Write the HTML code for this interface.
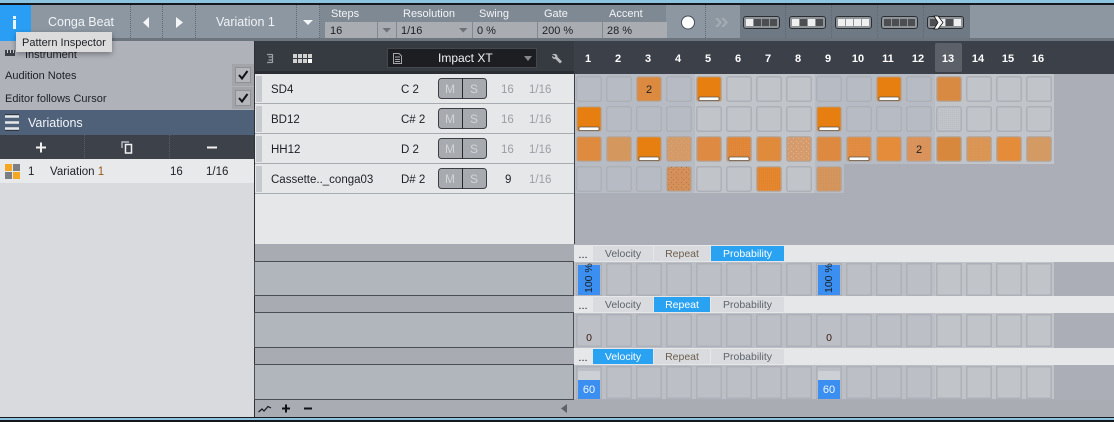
<!DOCTYPE html>
<html><head><meta charset="utf-8"><style>
html,body{margin:0;padding:0;background:#abaeb6}
svg{display:block}
text{font-family:"Liberation Sans",sans-serif;font-size:11px}
.w{fill:#f2f4f6;font-size:11px}
.d{fill:#1d2026}
.g{fill:#9b9ea3}
.h{fill:#fff;font-weight:bold;font-size:11px;text-anchor:middle}
.tab{font-size:10.500px;text-anchor:middle;fill:#5e646c}
</style></head><body>
<svg width="1114" height="422" viewBox="0 0 1114 422" xmlns="http://www.w3.org/2000/svg">
<defs>
<pattern id="c" patternUnits="userSpaceOnUse" x="576" y="76" width="30" height="30"><rect x=".75" y=".75" width="24.5" height="24.5" rx="2" fill="none" stroke="#adb0b7" stroke-width="1.500"/></pattern>
<pattern id="l" patternUnits="userSpaceOnUse" x="576" y="263" width="30" height="200"><rect x=".75" y=".75" width="24.5" height="31.5" fill="none" stroke="#aeb1b7" stroke-width="1.500"/></pattern>
<pattern id="dd" patternUnits="userSpaceOnUse" width="5" height="5"><rect x="1" y="2" width="1" height="1" fill="#a8764f"/><rect x="3" y="4" width="1" height="1" fill="#b07e56"/></pattern>
<pattern id="dw" patternUnits="userSpaceOnUse" width="5" height="5"><rect x="1" y="1" width="1" height="1" fill="#ecc4a2" opacity=".7"/><rect x="3" y="3" width="1" height="1" fill="#e8bd98" opacity=".7"/></pattern>
<pattern id="df" patternUnits="userSpaceOnUse" width="2" height="2"><rect width="1" height="1" fill="#e8a060" opacity=".25"/></pattern>
<pattern id="dg" patternUnits="userSpaceOnUse" width="2" height="2"><rect width="1" height="1" fill="#b3b6bb" opacity=".6"/></pattern>
<filter id="sh" x="-20%" y="-30%" width="140%" height="180%"><feDropShadow dx="0" dy="2" stdDeviation="3" flood-color="#000" flood-opacity=".35"/></filter>
</defs>

<!-- window edges -->
<rect width="1114" height="3" fill="#8cc3df"/><rect y="3" width="1114" height="2" fill="#15181c"/>

<!-- toolbar -->
<rect y="5" width="1114" height="33" fill="#8c97a2"/>
<rect y="38" width="1114" height="3" fill="#6c747e"/>
<rect x="320" y="5" width="346" height="33" fill="#7f8994"/>
<rect x="740" y="5" width="230" height="33" fill="#6f7984"/>
<g stroke="#5f6872" stroke-dasharray="1 1">
<path d="M130.500 5V38M162.500 5V38M195.500 5V38M296.500 5V38M319.500 5V38M705.500 5V38M785.500 5V38M831.500 5V38M877.500 5V38M923.500 5V38"/></g>
<rect y="5" width="31" height="36" fill="#2a9ef4"/>
<rect x="13" y="16" width="3" height="3" fill="#e8f4ff"/><rect x="13" y="20" width="3" height="9" fill="#e8f4ff"/>
<text x="48" y="26" fill="#f1f3f5" style="font-size:12.500px">Conga Beat</text>
<path d="M149 17V28L143 22.500Z" fill="#f4f5f6"/><path d="M176 17V28L183 22.500Z" fill="#f4f5f6"/>
<text x="216" y="26" style="font-size:12.500px" fill="#f1f3f5">Variation 1</text>
<path d="M303 20H313L308 25Z" fill="#f4f5f6"/>

<text x="331" y="17" class="w">Steps</text><text x="403" y="17" class="w">Resolution</text><text x="479" y="17" class="w">Swing</text><text x="544" y="17" class="w">Gate</text><text x="609" y="17" class="w">Accent</text>
<g fill="#a9adb2"><rect x="325" y="22" width="52" height="16"/><rect x="378" y="22" width="18" height="16"/><rect x="397" y="22" width="75" height="16"/><rect x="473" y="22" width="64" height="16"/><rect x="538" y="22" width="64" height="16"/><rect x="603" y="22" width="64" height="16"/></g>
<text x="330" y="34" class="d">16</text><text x="401" y="34" class="d">1/16</text><text x="477" y="34" class="d">0 %</text><text x="542" y="34" class="d">200 %</text><text x="607" y="34" class="d">28 %</text>
<path d="M382.500 28H391L386.750 32.500ZM459 28H467.500L463.250 32.500Z" fill="#6e7278"/>

<circle cx="688" cy="22.500" r="6.500" fill="#fff" stroke="#4a5058"/>
<path d="M715 18L719 22.500L715 27H718L722 22.500L718 18ZM721 18L725 22.500L721 27H724L728 22.500L724 18Z" fill="#a4aab0"/>

<!-- pattern buttons -->
<g stroke="#2b2e32" fill="#8f9499"><rect x="743.500" y="16.500" width="36" height="12" rx="2.500"/><rect x="789.500" y="16.500" width="36" height="12" rx="2.500"/><rect x="835.500" y="16.500" width="36" height="12" rx="2.500"/><rect x="881.500" y="16.500" width="36" height="12" rx="2.500"/><rect x="927.500" y="16.500" width="36" height="12" rx="2.500"/></g>
<g fill="#f0f0f0"><rect x="746" y="19" width="7" height="7"/><rect x="792" y="19" width="7" height="7"/><rect x="808" y="19" width="7" height="7"/><rect x="838" y="19" width="7" height="7"/><rect x="846" y="19" width="7" height="7"/><rect x="854" y="19" width="7" height="7"/><rect x="862" y="19" width="7" height="7"/><rect x="938" y="19" width="7" height="7"/><rect x="954" y="19" width="7" height="7"/></g>
<g fill="#4c4e52"><rect x="754" y="19" width="7" height="7"/><rect x="762" y="19" width="7" height="7"/><rect x="770" y="19" width="7" height="7"/><rect x="800" y="19" width="7" height="7"/><rect x="816" y="19" width="7" height="7"/><rect x="884" y="19" width="7" height="7"/><rect x="892" y="19" width="7" height="7"/><rect x="900" y="19" width="7" height="7"/><rect x="908" y="19" width="7" height="7"/><rect x="930" y="19" width="7" height="7"/><rect x="946" y="19" width="7" height="7"/></g>
<path d="M934 16H938L943 22.500L938 29H934L938 22.500Z" fill="#fff" stroke="#111" stroke-width=".8"/>

<!-- left panel -->
<rect y="41" width="254" height="69" fill="#b0b2ba"/>
<rect x="5" y="50" width="10" height="6" fill="#3c3f46"/>
<g fill="#d0d2d6"><rect x="7" y="50" width="1" height="3"/><rect x="10" y="50" width="1" height="3"/><rect x="13" y="50" width="1" height="3"/></g>
<text x="25" y="58" class="d">Instrument</text>
<text x="5" y="79" class="d">Audition Notes</text>
<text x="5" y="102" class="d">Editor follows Cursor</text>
<rect x="232" y="64" width="22" height="22" fill="#a2a4aa"/><rect x="235.500" y="67.500" width="15" height="15" fill="#b4b6bc" stroke="#8e9096"/>
<rect x="232" y="87" width="22" height="22" fill="#a2a4aa"/><rect x="235.500" y="90.500" width="15" height="15" fill="#b4b6bc" stroke="#8e9096"/>
<path d="M239 75L242 78.500L247.500 71M239 98L242 101.500L247.500 94" fill="none" stroke="#101215" stroke-width="2"/>

<rect y="110" width="254" height="25" fill="#4f6079"/>
<path d="M5 116.500H19M5 122.500H19M5 128.500H19" stroke="#e6e8ea" stroke-width="2.500"/>
<path d="M5 114.500H19M5 130.500H19" stroke="#242a33" stroke-width=".8"/>
<text x="28" y="127" fill="#f2f5f8" style="font-size:12.500px">Variations</text>
<rect y="135" width="254" height="24" fill="#3d4149"/>
<path d="M84.500 135V159M169.500 135V159" stroke="#5a5e66" stroke-dasharray="1 1"/>
<path d="M36 147.500H46M41 142.500V152.500M207 147.500H217" stroke="#f2f2f2" stroke-width="2" fill="none"/>
<path d="M122 148V142H129" fill="none" stroke="#cfd1d4" stroke-width="1.200"/><rect x="125.500" y="144.500" width="6" height="8.500" fill="#3d4149" stroke="#f2f2f2" stroke-width="1.500"/>
<rect y="159" width="254" height="24" fill="#e8e9ea"/>
<rect y="183" width="254" height="234" fill="#d9dade"/>
<rect x="5" y="164" width="7" height="7" fill="#f5a623"/><rect x="13" y="164" width="7" height="7" fill="#7c7f84"/><rect x="5" y="172" width="7" height="7" fill="#7c7f84"/><rect x="13" y="172" width="7" height="7" fill="#f5a623"/>
<text x="28" y="175" class="d" style="font-size:11.500px">1</text>
<text x="50" y="175" class="d" style="font-size:11.500px">Variation <tspan fill="#9c5a1a">1</tspan></text>
<text x="170" y="175" class="d" style="font-size:11.500px">16</text>
<text x="206" y="175" class="d" style="font-size:11.500px">1/16</text>

<!-- header -->
<rect x="254" y="41" width="860" height="33" fill="#3c4049"/>
<rect x="254" y="41" width="320" height="33" fill="#363a41"/>
<rect x="254" y="71" width="320" height="3" fill="#2a2d33"/>
<path d="M272.500 54V63M267 54.500H272M268.500 57H272M268.500 60H272M267 62.500H272" fill="none" stroke="#9b9ea3" stroke-width="1.200"/>
<g fill="#d2d2d2"><rect x="293" y="54" width="4" height="4"/><rect x="298" y="54" width="4" height="4"/><rect x="303" y="54" width="4" height="4"/><rect x="308" y="54" width="4" height="4"/><rect x="293" y="59" width="4" height="4"/><rect x="298" y="59" width="4" height="4"/><rect x="303" y="59" width="4" height="4"/></g>
<rect x="308" y="59" width="4" height="4" fill="#fff"/>
<rect x="387.500" y="48.500" width="149" height="19" fill="#1d1e21" stroke="#44474d"/>
<path d="M393.500 53.500H399L401.500 56V63.500H393.500ZM395 57H400M395 59.500H400M395 61.500H400" fill="none" stroke="#a5a7aa"/>
<text x="438" y="62" fill="#f0f2f4" style="font-size:12px">Impact XT</text>
<path d="M524 56H532L528 61Z" fill="#85888c"/>
<path d="M552 54.500C555 53 558 54.500 557.500 57L562 61.500L560 63.500L555.500 59C553.500 59.500 551.500 57.500 552 56L554.500 57.500L555.500 56Z" fill="#b9bbbe"/>
<rect x="935" y="43" width="27" height="29" rx="2" fill="#5c6068"/>
<text x="588" y="62" class="h">1</text><text x="618" y="62" class="h">2</text><text x="648" y="62" class="h">3</text><text x="678" y="62" class="h">4</text><text x="708" y="62" class="h">5</text><text x="738" y="62" class="h">6</text><text x="768" y="62" class="h">7</text><text x="798" y="62" class="h">8</text><text x="828" y="62" class="h">9</text><text x="858" y="62" class="h">10</text><text x="888" y="62" class="h">11</text><text x="918" y="62" class="h">12</text><text x="948" y="62" class="h">13</text><text x="978" y="62" class="h">14</text><text x="1008" y="62" class="h">15</text><text x="1038" y="62" class="h">16</text>

<!-- track list -->
<rect x="255" y="74" width="319" height="170" fill="#e6e7e9"/>
<rect x="254" y="41" width="1" height="376" fill="#2e3136"/>
<path d="M255 103.500H574M255 133.500H574M255 163.500H574M255 193.500H574" stroke="#a8abb0"/>
<g fill="#c6c9cd"><rect x="256" y="76" width="6" height="26"/><rect x="256" y="106" width="6" height="26"/><rect x="256" y="136" width="6" height="26"/><rect x="256" y="166" width="6" height="26"/></g>
<text x="271" y="93" class="d" style="font-size:11.500px">SD4</text><text x="271" y="123" class="d" style="font-size:11.500px">BD12</text><text x="271" y="153" class="d" style="font-size:11.500px">HH12</text><text x="271" y="183" class="d" style="font-size:11.500px">Cassette.._conga03</text>
<text x="401" y="93" class="d" style="font-size:11.500px">C 2</text><text x="401" y="123" class="d" style="font-size:11.500px">C# 2</text><text x="401" y="153" class="d" style="font-size:11.500px">D 2</text><text x="401" y="183" class="d" style="font-size:11.500px">D# 2</text>
<g fill="#a7aaaf" stroke="#3b3e43"><rect x="438.500" y="78.500" width="48" height="20" rx="3"/><rect x="438.500" y="108.500" width="48" height="20" rx="3"/><rect x="438.500" y="138.500" width="48" height="20" rx="3"/><rect x="438.500" y="168.500" width="48" height="20" rx="3"/></g>
<path d="M462.500 78V99M462.500 108V129M462.500 138V159M462.500 168V189" stroke="#26282c"/>
<g style="font-size:12px"><text x="445" y="93" fill="#d2d4d7" style="font-size:12px">M</text><text x="470" y="93" fill="#d2d4d7" style="font-size:12px">S</text><text x="445" y="123" fill="#d2d4d7" style="font-size:12px">M</text><text x="470" y="123" fill="#d2d4d7" style="font-size:12px">S</text><text x="445" y="153" fill="#d2d4d7" style="font-size:12px">M</text><text x="470" y="153" fill="#d2d4d7" style="font-size:12px">S</text><text x="445" y="183" fill="#d2d4d7" style="font-size:12px">M</text><text x="470" y="183" fill="#d2d4d7" style="font-size:12px">S</text></g>
<text x="501" y="93" class="g" style="font-size:11.500px">16</text><text x="529" y="93" class="g" style="font-size:11.500px">1/16</text>
<text x="501" y="123" class="g" style="font-size:11.500px">16</text><text x="529" y="123" class="g" style="font-size:11.500px">1/16</text>
<text x="501" y="153" class="g" style="font-size:11.500px">16</text><text x="529" y="153" class="g" style="font-size:11.500px">1/16</text>
<text x="505" y="183" class="d" style="font-size:11.500px">9</text><text x="529" y="183" class="g" style="font-size:11.500px">1/16</text>

<!-- grid backgrounds -->
<rect x="574" y="74" width="540" height="343" fill="#abaeb6"/>
<rect x="574" y="74" width="1" height="170" fill="#3a3d42"/>
<rect x="575" y="74" width="120" height="90" fill="#b7bbc3"/><rect x="695" y="74" width="120" height="90" fill="#c1c4c9"/><rect x="815" y="74" width="120" height="90" fill="#b7bbc3"/><rect x="935" y="74" width="119" height="90" fill="#c1c4c9"/>
<rect x="575" y="164" width="120" height="29" fill="#b7bbc3"/><rect x="695" y="164" width="120" height="29" fill="#c1c4c9"/><rect x="815" y="164" width="29" height="29" fill="#b7bbc3"/>
<rect x="575" y="74" width="479" height="90" fill="url(#c)"/><rect x="575" y="164" width="269" height="29" fill="url(#c)"/>

<!-- active cells -->
<g stroke="#b9a28c" stroke-width=".8">
<rect x="637" y="77" width="24" height="24" rx="2" fill="#dc8a3f"/>
<rect x="697" y="77" width="24" height="24" rx="2" fill="#e67e10"/>
<rect x="877" y="77" width="24" height="24" rx="2" fill="#e67e10"/>
<rect x="937" y="77" width="24" height="24" rx="2" fill="#d98a42"/>
<rect x="577" y="107" width="24" height="24" rx="2" fill="#e67e10"/>
<rect x="817" y="107" width="24" height="24" rx="2" fill="#e67e10"/>
<rect x="577" y="137" width="24" height="24" rx="2" fill="#de8a3f"/>
<rect x="607" y="137" width="24" height="24" rx="2" fill="#d4985f"/>
<rect x="637" y="137" width="24" height="24" rx="2" fill="#e67e10"/>
<rect x="667" y="137" width="24" height="24" rx="2" fill="#d49a68"/>
<rect x="697" y="137" width="24" height="24" rx="2" fill="#de8a42"/>
<rect x="727" y="137" width="24" height="24" rx="2" fill="#e08535"/>
<rect x="757" y="137" width="24" height="24" rx="2" fill="#e08a3c"/>
<rect x="787" y="137" width="24" height="24" rx="2" fill="#d69b6c"/>
<rect x="817" y="137" width="24" height="24" rx="2" fill="#dd8a40"/>
<rect x="847" y="137" width="24" height="24" rx="2" fill="#e08a40"/>
<rect x="877" y="137" width="24" height="24" rx="2" fill="#e48c3a"/>
<rect x="907" y="137" width="24" height="24" rx="2" fill="#d9925a"/>
<rect x="937" y="137" width="24" height="24" rx="2" fill="#d8883c"/>
<rect x="967" y="137" width="24" height="24" rx="2" fill="#da9555"/>
<rect x="997" y="137" width="24" height="24" rx="2" fill="#e48c3a"/>
<rect x="1027" y="137" width="24" height="24" rx="2" fill="#d49a64"/>
<rect x="667" y="167" width="24" height="24" rx="2" fill="#d49058"/>
<rect x="757" y="167" width="24" height="24" rx="2" fill="#e4842a"/>
<rect x="817" y="167" width="24" height="24" rx="2" fill="#d3945c"/>
</g>
<rect x="937" y="107" width="24" height="24" fill="url(#dg)"/>
<rect x="667" y="137" width="24" height="24" fill="url(#dw)" opacity=".4"/>
<rect x="727" y="137" width="24" height="24" fill="url(#df)"/>
<rect x="787" y="137" width="24" height="24" fill="url(#dw)"/>
<rect x="847" y="137" width="24" height="24" fill="url(#df)"/>
<rect x="907" y="137" width="24" height="24" fill="url(#df)"/>
<rect x="967" y="137" width="24" height="24" fill="url(#df)"/>
<rect x="667" y="167" width="24" height="24" fill="url(#dd)"/>
<rect x="757" y="167" width="24" height="24" fill="url(#df)"/>
<rect x="817" y="167" width="24" height="24" fill="url(#df)"/>
<g fill="#fff" stroke="#5c534a" stroke-width=".8">
<rect x="699" y="97" width="20" height="3.500" rx="1"/><rect x="879" y="97" width="20" height="3.500" rx="1"/>
<rect x="579" y="127" width="20" height="3.500" rx="1"/><rect x="819" y="127" width="20" height="3.500" rx="1"/>
<rect x="639" y="157" width="20" height="3.500" rx="1"/><rect x="729" y="157" width="20" height="3.500" rx="1"/><rect x="849" y="157" width="20" height="3.500" rx="1"/>
</g>
<text x="649" y="93" class="d" text-anchor="middle">2</text><text x="919" y="153" class="d" text-anchor="middle">2</text>

<!-- lower lanes: left -->
<rect x="255" y="244" width="319" height="173" fill="#a8abb2"/>
<g fill="#b0b6bc" stroke="#4a4d52"><rect x="254.500" y="261.500" width="319" height="34"/><rect x="254.500" y="312.500" width="319" height="35"/><rect x="254.500" y="364.500" width="319" height="35"/></g>

<!-- lower lanes: tabs -->
<g fill="#e6e7e9"><rect x="574" y="245" width="540" height="17"/><rect x="574" y="296" width="540" height="17"/><rect x="574" y="348" width="540" height="17"/></g>
<g fill="#d9dbde"><rect x="593" y="246" width="60" height="15"/><rect x="654" y="246" width="56" height="15"/><rect x="593" y="297" width="60" height="15"/><rect x="711" y="297" width="73" height="15"/><rect x="654" y="349" width="56" height="15"/><rect x="711" y="349" width="73" height="15"/></g>
<g fill="#2aa2f2"><rect x="711" y="246" width="73" height="15"/><rect x="654" y="297" width="56" height="15"/><rect x="593" y="349" width="60" height="15"/></g>
<text x="583" y="258" class="d" text-anchor="middle">...</text><text x="583" y="309" class="d" text-anchor="middle">...</text><text x="583" y="361" class="d" text-anchor="middle">...</text>
<text x="623" y="257" class="tab">Velocity</text><text x="682" y="257" class="tab" style="fill:#6d5f4f">Repeat</text><text x="747.500" y="257" class="tab" style="fill:#fff">Probability</text>
<text x="623" y="308" class="tab">Velocity</text><text x="682" y="308" class="tab" style="fill:#fff">Repeat</text><text x="747.500" y="308" class="tab">Probability</text>
<text x="623" y="360" class="tab" style="fill:#fff">Velocity</text><text x="682" y="360" class="tab" style="fill:#6d5f4f">Repeat</text><text x="747.500" y="360" class="tab">Probability</text>

<!-- lane cells -->
<rect x="574" y="262" width="361" height="34" fill="#bcbfc5"/><rect x="935" y="262" width="119" height="34" fill="#c1c4c9"/>
<rect x="574" y="313" width="361" height="35" fill="#bcbfc5"/><rect x="935" y="313" width="119" height="35" fill="#c1c4c9"/>
<rect x="574" y="365" width="361" height="34" fill="#bcbfc5"/><rect x="935" y="365" width="119" height="34" fill="#c1c4c9"/>
<rect x="575" y="263" width="479" height="33" fill="url(#l)"/>
<rect x="575" y="263" width="479" height="33" fill="url(#l)" transform="translate(0,51)"/>
<rect x="575" y="263" width="479" height="33" fill="url(#l)" transform="translate(0,103)"/>
<rect x="578" y="265" width="22" height="30" fill="#3b8ff0"/><rect x="818" y="265" width="22" height="30" fill="#3b8ff0"/>
<text transform="translate(592,293) rotate(-90)" class="d" style="font-size:10.500px">100 %</text>
<text transform="translate(832,293) rotate(-90)" class="d" style="font-size:10.500px">100 %</text>
<text x="589" y="341" fill="#3a1a10" text-anchor="middle" style="font-size:10.500px">0</text><text x="829" y="341" fill="#3a1a10" text-anchor="middle" style="font-size:10.500px">0</text>
<rect x="578" y="371" width="22" height="9" rx="1" fill="#cdd0d4"/><rect x="818" y="371" width="22" height="9" rx="1" fill="#cdd0d4"/>
<rect x="578" y="380" width="22" height="19" fill="#3b8ff0"/><rect x="818" y="380" width="22" height="19" fill="#3b8ff0"/>
<text x="589" y="393" fill="#f2f6fb" text-anchor="middle">60</text><text x="829" y="393" fill="#f2f6fb" text-anchor="middle">60</text>

<!-- bottom bar -->
<rect x="255" y="400" width="859" height="17" fill="#a9acb3"/>
<path d="M258.500 412L262 409L264 411L268 406.500L271 408" fill="none" stroke="#15171a" stroke-width="1.200"/>
<path d="M282 408.500H290M286 404.500V412.500M304 408.500H312" stroke="#101215" stroke-width="2" fill="none"/>
<path d="M567 404V413L561 408.500Z" fill="#5e6268"/>
<rect y="417" width="1114" height="1" fill="#15181c"/><rect y="418" width="1114" height="2" fill="#8cc3df"/><rect y="420" width="1114" height="2" fill="#15181c"/>

<!-- tooltip -->
<rect x="16" y="32" width="96" height="20" fill="#dcdcdc" filter="url(#sh)"/>
<text x="22" y="46" class="d">Pattern Inspector</text>
</svg>
</body></html>
